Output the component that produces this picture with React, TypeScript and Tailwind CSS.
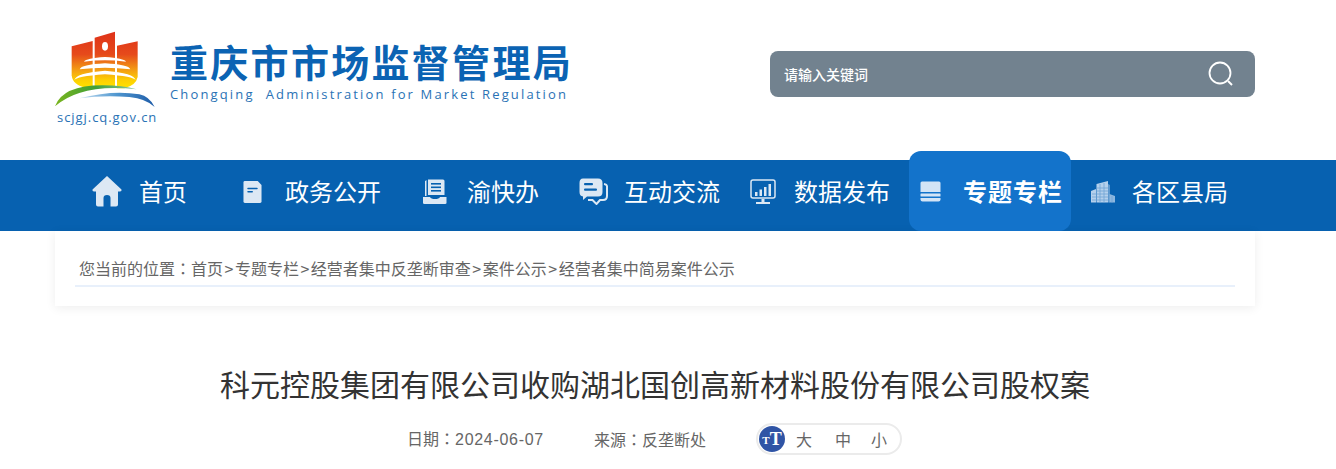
const cjk = { fontFamily: '"Noto Sans CJK SC", "Liberation Sans", sans-serif' };
const colonFont = { fontFamily: '"Noto Sans CJK TC", sans-serif' };

const HomeIcon = () => (
  <svg width="30" height="31" viewBox="0 0 30 31" fill="#dce8f4">
    <path d="M15 0 L29.5 13.5 Q30 15.5 28 15.5 H26 V28.5 Q26 30.5 24 30.5 H18.5 V22 Q18.5 19 15 19 Q11.5 19 11.5 22 V30.5 H6 Q4 30.5 4 28.5 V15.5 H2 Q0 15.5 0.5 13.5 Z" />
  </svg>
);

const DocIcon = () => (
  <svg width="20" height="24" viewBox="0 0 20 24">
    <path d="M2 0.5 H15.5 L19.5 4.5 V22 Q19.5 23.5 18 23.5 H2 Q0.5 23.5 0.5 22 V2 Q0.5 0.5 2 0.5 Z" fill="#dce8f4" />
    <rect x="4.5" y="7.5" width="11" height="1.6" rx="0.8" fill="#0761b0" />
    <rect x="4.5" y="11" width="6" height="1.6" rx="0.8" fill="#0761b0" />
  </svg>
);

const BookIcon = () => (
  <svg width="24" height="25" viewBox="0 0 24 25" fill="#dce8f4">
    <path d="M3 1.5 L3.5 1 V17 H2 V2 Z" />
    <path d="M5 0.5 H20 Q21.5 0.5 21.5 2 V16 H5 Z" />
    <rect x="8" y="4" width="10" height="1.6" fill="#0761b0" />
    <rect x="8" y="7.5" width="10" height="1.6" fill="#0761b0" />
    <rect x="8" y="11" width="10" height="1.6" fill="#0761b0" />
    <path d="M0 18 H7 Q8 20 12 20 Q16 20 17 18 H23.5 V24 Q23.5 25 22 25 H1.5 Q0 25 0 24 Z" />
  </svg>
);

const ChatIcon = () => (
  <svg width="29" height="27" viewBox="0 0 29 27">
    <path d="M25 6 Q28.5 6.5 28 10 V18 Q28 22 24 22 H21 L17.5 26 L13.5 22 H9" fill="none" stroke="#dce8f4" strokeWidth="2" />
    <path d="M4 0.5 H19 Q23.5 0.5 23.5 5 V14 Q23.5 18.5 19 18.5 H8 L4 22 V18.5 Q0.5 18 0.5 14 V5 Q0.5 0.5 4 0.5 Z" fill="#dce8f4" />
    <rect x="5" y="5" width="9" height="2.2" rx="1" fill="#0761b0" />
    <rect x="5" y="10.5" width="13" height="2.2" rx="1" fill="#0761b0" />
  </svg>
);

const MonitorIcon = () => (
  <svg width="26" height="26" viewBox="0 0 26 26" fill="#dce8f4">
    <rect x="1" y="1" width="24" height="18" rx="2" fill="none" stroke="#dce8f4" strokeWidth="1.5" />
    <rect x="5" y="13" width="2.5" height="4" />
    <rect x="9.5" y="10.5" width="2.5" height="6.5" />
    <rect x="14" y="8" width="2.5" height="9" />
    <rect x="18.5" y="5" width="2.5" height="12" />
    <rect x="11.5" y="20" width="3" height="3" />
    <rect x="6" y="23" width="14" height="2" />
  </svg>
);

const LayersIcon = () => (
  <svg width="21" height="21" viewBox="0 0 21 21" fill="#d3e4f6">
    <path d="M2 0.5 H19 Q20.5 0.5 20.5 2 V11 H0.5 V2 Q0.5 0.5 2 0.5 Z" />
    <rect x="0.5" y="12.5" width="20" height="3" rx="0.5" />
    <path d="M0.5 17 H20.5 V18.5 Q20.5 20.5 18.5 20.5 H2.5 Q0.5 20.5 0.5 18.5 Z" />
  </svg>
);

const BuildingIcon = () => (
  <svg width="24" height="22" viewBox="0 0 24 22">
    <path d="M0 21.5 V10 L5 8 V21.5 Z M5.5 21.5 V3 L17 0 V21.5 Z M17.5 21.5 V3 L18.5 4 V21.5 Z" fill="#b4d0ec" />
    <path d="M18.5 21.5 V13 L24 15 V21.5 Z" fill="#8db7df" />
    <g stroke="#6fa3d6" strokeWidth="0.8">
      <path d="M1 13 H5 M1 16 H5 M1 19 H5 M5.5 7 H17 M5.5 10 H17 M5.5 13 H17 M5.5 16 H17 M5.5 19 H17" />
      <path d="M9 3 V21.5 M13 2 V21.5 M21 15 V21.5" />
    </g>
  </svg>
);

const Logo = () => (
  <svg width="100" height="79" viewBox="47 30 300 235">
    <defs>
      <linearGradient id="flag" x1="0" y1="35" x2="0" y2="195" gradientUnits="userSpaceOnUse">
        <stop offset="0" stopColor="#df3219" />
        <stop offset="0.42" stopColor="#e64a1b" />
        <stop offset="0.7" stopColor="#f39a14" />
        <stop offset="0.9" stopColor="#fdcf03" />
        <stop offset="1" stopColor="#ffdc00" />
      </linearGradient>
      <linearGradient id="grass" x1="47" y1="0" x2="290" y2="0" gradientUnits="userSpaceOnUse">
        <stop offset="0" stopColor="#7ab51d" />
        <stop offset="0.5" stopColor="#3f9f38" />
        <stop offset="1" stopColor="#8fc6a0" />
      </linearGradient>
      <linearGradient id="river" x1="120" y1="0" x2="345" y2="0" gradientUnits="userSpaceOnUse">
        <stop offset="0" stopColor="#c5e0f2" />
        <stop offset="0.5" stopColor="#4f96cf" />
        <stop offset="1" stopColor="#1e5ca8" />
      </linearGradient>
    </defs>
    <path d="M97 78 L160 62 V202 H140 Q100 195 97 165 Z" fill="url(#flag)" />
    <path d="M166 52 L227 34 V198 H166 Z" fill="url(#flag)" />
    <path d="M233 76 L295 63 V170 Q290 195 255 204 H233 Z" fill="url(#flag)" />
    <ellipse cx="197" cy="78" rx="9" ry="13" fill="#fff" />
    <g fill="#fff">
      <path d="M134 124 Q140 114 197 110 Q254 114 260 124 Q197 116 134 124 Z" />
      <path d="M121 147 Q125 133 197 129 Q269 133 273 147 Q197 138 121 147 Z" />
      <path d="M105 180 Q108 158 197 151 Q286 158 289 180 Q284 168 197 162 Q110 168 105 180 Z" />
    </g>
    <path d="M47 258 Q70 195 190 195 Q250 195 292 207 Q190 195 120 218 Q80 230 47 258 Z" fill="url(#grass)" />
    <path d="M120 234 Q220 208 300 222 Q330 228 346 260 Q320 235 270 230 Q190 224 120 234 Z" fill="url(#river)" />
  </svg>
);

const navItems = [
  { label: '首页', icon: <HomeIcon />, box: 'ml-[37px] w-[95px]', gap: 'gap-[17px]' },
  { label: '政务公开', icon: <DocIcon />, box: 'ml-[56px] w-[138px]', gap: 'gap-[23px]' },
  { label: '渝快办', icon: <BookIcon />, box: 'ml-[42px] w-[116px]', gap: 'gap-[20px]' },
  { label: '互动交流', icon: <ChatIcon />, box: 'ml-[40px] w-[142px]', gap: 'gap-[16px]' },
  { label: '数据发布', icon: <MonitorIcon />, box: 'ml-[29px] w-[141px]', gap: 'gap-[18px]' },
];

const crumbs = ['首页', '专题专栏', '经营者集中反垄断审查', '案件公示', '经营者集中简易案件公示'];

const App = () => {
  return (
    <div className="h-[469px] overflow-hidden bg-white" style={cjk}>
      {/* 顶部 */}
      <div className="h-[160px] pl-[55px] flex">
        <div className="w-[715px] pt-[30px] flex">
          <div className="w-[115px] flex flex-col">
            <Logo />
            <p className="text-[13px] leading-[15px] mt-[1px] ml-[2px] tracking-[0.95px] text-[#2a72b5] whitespace-nowrap" style={{ fontFamily: '"Open Sans", sans-serif' }}>
              scjgj.cq.gov.cn
            </p>
          </div>
          <div className="pt-[8px]">
            <h1 className="text-[38px] leading-[46px] font-bold text-[#0b63b3] tracking-[2.3px] whitespace-nowrap">
              重庆市市场监督管理局
            </h1>
            <p className="text-[13px] leading-[16px] mt-[2px] tracking-[2.15px] text-[#2a72b5] whitespace-pre" style={{ fontFamily: '"Open Sans", sans-serif' }}>
              Chongqing  Administration for Market Regulation
            </p>
          </div>
        </div>
        <div className="mt-[51px] w-[485px] h-[46px] rounded-lg bg-[#72828f] flex items-center justify-between pl-[15px] pr-[21px]">
          <span className="text-[14px] font-medium text-white -ml-[1px]">请输入关键词</span>
          <svg width="26" height="26" viewBox="0 0 26 26" fill="none" stroke="#fff" className="-mt-[1px]">
            <circle cx="12" cy="12" r="10.5" strokeWidth="1.8" />
            <path d="M20 20 L24 24" strokeWidth="2" />
          </svg>
        </div>
      </div>

      {/* 导航 */}
      <div className="h-[71px] bg-[#0761b0] pl-[55px]">
        <div className="flex w-[1200px] h-[71px] items-center pb-[8px]">
          {navItems.map((item) => (
            <a key={item.label} className={`flex items-center shrink-0 text-[24px] text-white whitespace-nowrap ${item.box} ${item.gap}`}>
              {item.icon}
              <span className="-mt-[1px]">{item.label}</span>
            </a>
          ))}
          <a className="ml-[18px] w-[162px] h-[80px] self-start -mt-[9px] shrink-0 rounded-xl bg-[#1373cb] flex items-center gap-[22px] pl-[11px] text-[24px] font-bold text-white tracking-[1px] whitespace-nowrap">
            <LayersIcon />
            <span>专题专栏</span>
          </a>
          <a className="ml-[20px] flex items-center gap-[17px] text-[24px] text-white whitespace-nowrap">
            <BuildingIcon />
            <span className="-mt-[1px]">各区县局</span>
          </a>
        </div>
      </div>

      {/* 面包屑 */}
      <div className="ml-[55px] w-[1200px] h-[75px] bg-white shadow-[0_2px_10px_rgba(0,0,0,0.07)] px-[20px] pt-[24px]">
        <div className="h-[32px] border-b-2 border-[#e8f0fb] pl-[4px] text-[16px] leading-[27px] text-[#666] whitespace-nowrap">
          您当前的位置<span style={colonFont}>：</span>
          {crumbs.map((c, i) => (
            <span key={c}>
              {i > 0 && <span className="mx-[1.5px]">&gt;</span>}
              {c}
            </span>
          ))}
        </div>
      </div>

      {/* 标题 */}
      <div className="ml-[55px] w-[1200px]">
        <h2 className="mt-[55px] text-center text-[30px] leading-[44px] text-[#333] whitespace-nowrap">
          科元控股集团有限公司收购湖北国创高新材料股份有限公司股权案
        </h2>
        <div className="mt-[18px] flex items-center text-[16px] text-[#666] pl-[352px]">
          <span className="w-[187px]">日期<span style={colonFont}>：</span><span className="tracking-[0.7px]" style={{ fontFamily: '"Liberation Sans", sans-serif' }}>2024-06-07</span></span>
          <span className="w-[162px]">来源<span style={colonFont}>：</span>反垄断处</span>
          <div className="w-[146px] h-[32px] rounded-full border-2 border-[#ebebeb] flex items-center pl-[1px]">
            <span className="w-[26px] h-[26px] rounded-full bg-[#2f54a5] text-white font-bold flex items-center justify-center text-[18px] leading-none" style={{ fontFamily: '"Liberation Serif", serif' }}>
              <span className="text-[11px] mt-[3px]">T</span>T
            </span>
            <span className="ml-[11px]">大</span>
            <span className="ml-[23px]">中</span>
            <span className="ml-[20px]">小</span>
          </div>
        </div>
      </div>
    </div>
  );
};

export default App;
